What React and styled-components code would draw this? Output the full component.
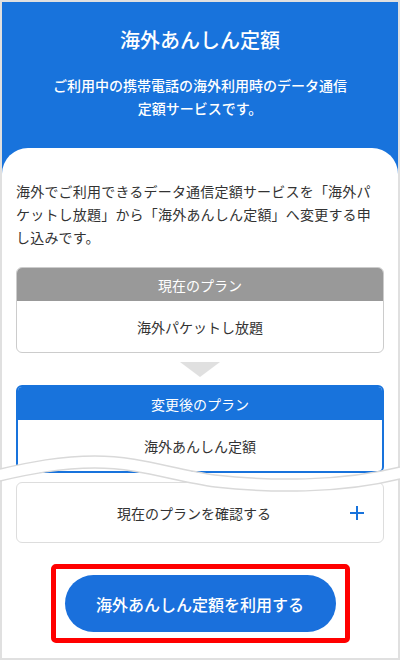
import React from "react";
import styled, { createGlobalStyle } from "styled-components";

const GlobalStyle = createGlobalStyle`
  * { box-sizing: border-box; }
  body {
    margin: 0;
    font-family: "Noto Sans CJK JP", "Noto Sans", sans-serif;
    color: #333;
  }
`;

const BLUE = "#1873dc";

const Screen = styled.div`
  position: relative;
  width: 400px;
  height: 660px;
  overflow: hidden;
`;

const Frame = styled.div`
  display: flex;
  flex-direction: column;
  height: 100%;
  border: 2px solid #e0e0e0;
  background: #fff;
`;

const Header = styled.header`
  background: ${BLUE};
  color: #fff;
  text-align: center;
  padding: 24px 16px 54px;

  h1 {
    margin: 0;
    font-size: 20px;
    line-height: 28px;
    font-weight: 500;
  }
  p {
    margin: 20px 0 0;
    font-size: 14px;
    line-height: 23px;
    font-weight: 500;
  }
`;

const Card = styled.main`
  position: relative;
  flex: 1;
  display: flex;
  flex-direction: column;
  margin-top: -26px;
  padding: 32px 14px 0;
  background: #fff;
  border-radius: 26px 26px 0 0;
`;

const Lead = styled.p`
  margin: 0 0 18px;
  font-size: 14px;
  line-height: 23px;
  letter-spacing: 0.2px;
  color: #333;
`;

const PlanBox = styled.section`
  border: ${(p) => (p.$active ? `2px solid ${BLUE}` : "1px solid #cccccc")};
  border-radius: 6px;
  overflow: hidden;
`;

const PlanHead = styled.div`
  height: 33px;
  display: flex;
  align-items: center;
  justify-content: center;
  background: ${(p) => (p.$active ? BLUE : "#999999")};
  color: #fff;
  font-size: 14px;
`;

const PlanBody = styled.div`
  height: 51px;
  display: flex;
  align-items: center;
  justify-content: center;
  font-size: 14px;
  color: #333;
`;

const Arrow = styled.div`
  align-self: center;
  width: 0;
  height: 0;
  margin: 9px 0 8px;
  border-left: 20px solid transparent;
  border-right: 20px solid transparent;
  border-top: 15px solid #e0e0e0;
`;

const Confirm = styled.button`
  display: grid;
  grid-template-columns: 1fr auto;
  align-items: center;
  column-gap: 6px;
  height: 61px;
  margin-top: 9px;
  padding: 0 18px 0 28px;
  background: #fff;
  border: 1px solid #dddddd;
  border-radius: 6px;
  font-family: inherit;
  font-size: 14px;
  color: #333;
  text-align: center;
`;

const Highlight = styled.div`
  align-self: center;
  margin-top: 21px;
  padding: 6px 9px;
  border: 5px solid #ff0000;
  border-radius: 5px;
`;

const UseButton = styled.button`
  display: block;
  width: 271px;
  height: 57px;
  border: none;
  border-radius: 29px;
  background: #1a70dc;
  color: #fff;
  font-family: inherit;
  font-size: 16px;
  font-weight: 500;
`;

const Wave = styled.svg`
  position: absolute;
  left: 0;
  top: 440px;
  width: 400px;
  height: 60px;
  pointer-events: none;
`;

const Plus = () => (
  <svg width="16" height="16" viewBox="0 0 16 16">
    <path d="M8 1v14M1 8h14" stroke={BLUE} strokeWidth="2" fill="none" />
  </svg>
);

const TOP =
  "M0,469 C30,462 60,456 95,456 C140,456 175,470 215,475 C270,481 340,482 400,467";
const BOTTOM =
  "M0,481 C30,474 60,468 95,468 C140,468 175,482 215,487 C270,493 340,494 400,479";
const BOTTOM_REV =
  "L400,479 C340,494 270,493 215,487 C175,482 140,468 95,468 C60,468 30,474 0,481 Z";

const App = () => {
  return (
    <Screen>
      <GlobalStyle />
      <Frame>
        <Header>
          <h1>海外あんしん定額</h1>
          <p>
            ご利用中の携帯電話の海外利用時のデータ通信
            <br />
            定額サービスです。
          </p>
        </Header>
        <Card>
          <Lead>
            海外でご利用できるデータ通信定額サービスを「海外パケットし放題」から「海外あんしん定額」へ変更する申し込みです。
          </Lead>
          <PlanBox>
            <PlanHead>現在のプラン</PlanHead>
            <PlanBody>海外パケットし放題</PlanBody>
          </PlanBox>
          <Arrow />
          <PlanBox $active>
            <PlanHead $active>変更後のプラン</PlanHead>
            <PlanBody>海外あんしん定額</PlanBody>
          </PlanBox>
          <Confirm>
            <span>現在のプランを確認する</span>
            <Plus />
          </Confirm>
          <Highlight>
            <UseButton>海外あんしん定額を利用する</UseButton>
          </Highlight>
        </Card>
      </Frame>
      <Wave viewBox="0 440 400 60">
        <path d={TOP + " " + BOTTOM_REV} fill="#fff" />
        <path d={TOP} stroke="#d9d9d9" strokeWidth="1.5" fill="none" />
        <path d={BOTTOM} stroke="#d9d9d9" strokeWidth="1.5" fill="none" />
      </Wave>
    </Screen>
  );
};

export default App;
